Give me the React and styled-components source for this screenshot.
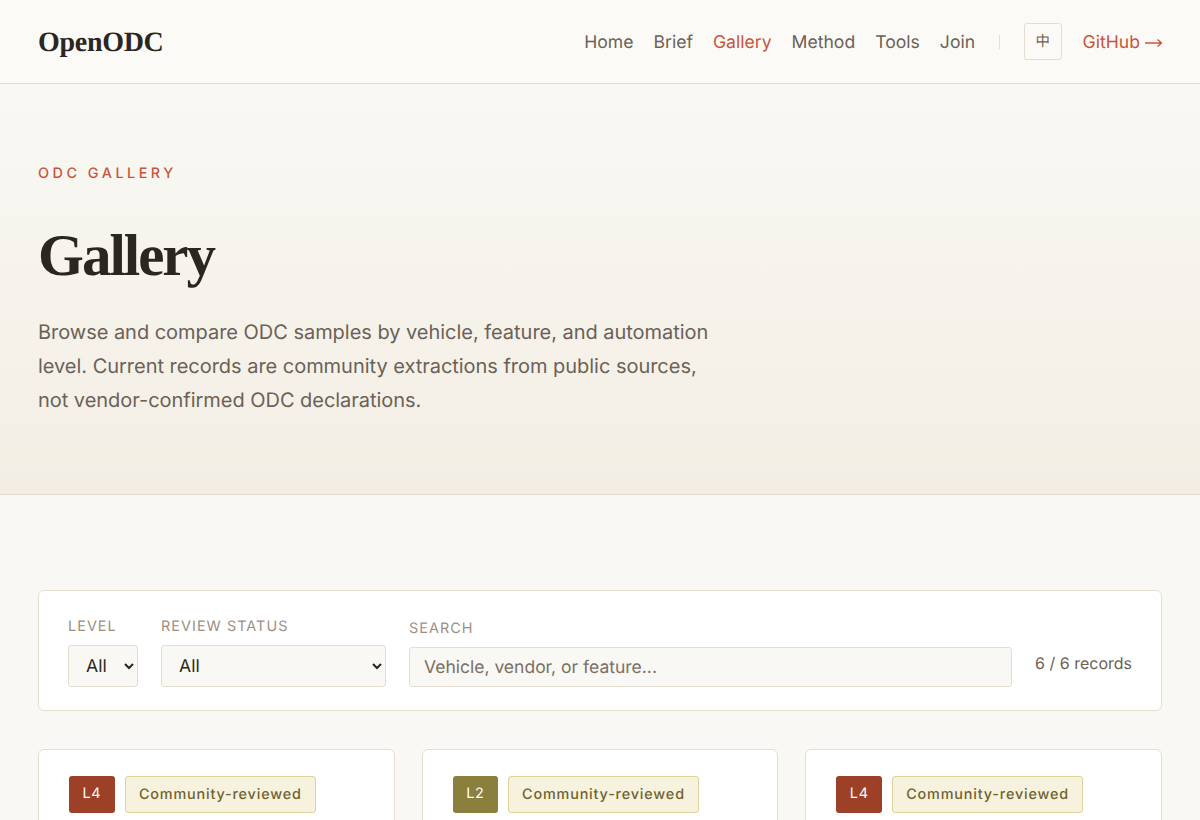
import React from "react";
import styled, { createGlobalStyle } from "styled-components";

const GlobalStyle = createGlobalStyle`
  * {
    box-sizing: border-box;
    text-rendering: geometricPrecision;
  }
  body {
    margin: 0;
    background: #f9f8f4;
    color: #2b2622;
    font-family: Inter, "Noto Sans", sans-serif;
  }
`;

const navLinks = ["Home", "Brief", "Gallery", "Method", "Tools", "Join"];

const cards = [
  { level: "L4", status: "Community-reviewed" },
  { level: "L2", status: "Community-reviewed" },
  { level: "L4", status: "Community-reviewed" },
];

function App() {
  return (
    <div>
      <GlobalStyle />
      <Header>
        <Logo>OpenODC</Logo>
        <Nav>
          {navLinks.map((link) => (
            <NavLink key={link} $active={link === "Gallery"}>
              {link}
            </NavLink>
          ))}
          <NavDivider />
          <LangButton>中</LangButton>
          <GithubLink>
            GitHub
            <svg width="17" height="10" viewBox="0 0 17 10" fill="none" stroke="currentColor" strokeWidth="1.3">
              <path d="M0 5H16.5M12.5 1.5L16.5 5L12.5 8.5" />
            </svg>
          </GithubLink>
        </Nav>
      </Header>

      <Hero>
        <Eyebrow>ODC GALLERY</Eyebrow>
        <Title>Gallery</Title>
        <Lead>
          Browse and compare ODC samples by vehicle, feature, and automation
          level. Current records are community extractions from public sources,
          not vendor-confirmed ODC declarations.
        </Lead>
      </Hero>

      <Main>
        <FilterPanel>
          <Field>
            <FieldLabel>Level</FieldLabel>
            <Select $width="70px" defaultValue="All">
              <option>All</option>
              <option>L2</option>
              <option>L4</option>
            </Select>
          </Field>
          <Field>
            <FieldLabel>Review status</FieldLabel>
            <Select $width="225px" defaultValue="All">
              <option>All</option>
              <option>Community-reviewed</option>
            </Select>
          </Field>
          <SearchField>
            <FieldLabel>Search</FieldLabel>
            <SearchInput placeholder="Vehicle, vendor, or feature..." />
          </SearchField>
          <RecordCount>6 / 6 records</RecordCount>
        </FilterPanel>

        <CardGrid>
          {cards.map((card, i) => (
            <Card key={i}>
              <BadgeRow>
                <LevelBadge $level={card.level}>{card.level}</LevelBadge>
                <StatusBadge>{card.status}</StatusBadge>
              </BadgeRow>
            </Card>
          ))}
        </CardGrid>
      </Main>
    </div>
  );
}

const Header = styled.header`
  height: 84px;
  padding: 0 38px;
  display: flex;
  align-items: center;
  justify-content: space-between;
  background: #fbfaf6;
  border-bottom: 1px solid #e2dcd0;
`;

const Logo = styled.div`
  padding-top: 2px;
  font-family: "Liberation Serif", serif;
  font-weight: 700;
  font-size: 28px;
  letter-spacing: -0.3px;
  color: #2b2622;
`;

const Nav = styled.nav`
  display: flex;
  align-items: center;
`;

const NavLink = styled.a`
  padding-top: 2px;
  font-size: 17.6px;
  margin-right: 20px;
  color: ${(p) => (p.$active ? "#c8553a" : "#6b6157")};
`;

const NavDivider = styled.span`
  width: 1px;
  height: 14px;
  margin: 0 24px 0 3.5px;
  background: #e5dfd3;
`;

const LangButton = styled.button`
  width: 38px;
  height: 37px;
  padding: 0 0 3px;
  margin-right: 21px;
  border: 1px solid #e5ddd0;
  border-radius: 3px;
  background: transparent;
  color: #6b6157;
  font-family: "Noto Sans CJK SC", sans-serif;
  font-size: 14.4px;
`;

const GithubLink = styled.a`
  padding-top: 2px;
  display: flex;
  align-items: center;
  gap: 5px;
  font-size: 17.6px;
  color: #c8553a;
`;

const Hero = styled.section`
  height: 411px;
  padding: 81px 38px 0;
  background: linear-gradient(180deg, #f9f8f4 0%, #f3eee4 100%);
  border-bottom: 1px solid #e2dcd0;
`;

const Eyebrow = styled.div`
  font-size: 14.4px;
  line-height: 17px;
  font-weight: 500;
  letter-spacing: 3.5px;
  color: #c8553a;
`;

const Title = styled.h1`
  margin: 37px 0 0;
  font-family: "Liberation Serif", serif;
  font-weight: 700;
  font-size: 59px;
  line-height: 72px;
  letter-spacing: -2px;
  color: #2b2622;
`;

const Lead = styled.p`
  margin: 24px 0 0;
  max-width: 680px;
  font-size: 20px;
  line-height: 34px;
  letter-spacing: -0.03px;
  color: #6b6157;
`;

const Main = styled.main`
  padding: 95px 38px 40px;
`;

const FilterPanel = styled.div`
  height: 121px;
  padding: 0 29px 23px;
  display: flex;
  align-items: flex-end;
  gap: 23px;
  background: #fff;
  border: 1px solid #e5ddd0;
  border-radius: 6px;
`;

const Field = styled.label`
  display: flex;
  flex-direction: column;
  gap: 10px;
`;

const SearchField = styled(Field)`
  flex: 1;
`;

const FieldLabel = styled.span`
  font-size: 14.4px;
  line-height: 17px;
  letter-spacing: 1.05px;
  text-transform: uppercase;
  color: #9a8f82;
`;

const Select = styled.select`
  width: ${(p) => p.$width};
  height: 42px;
  padding: 0 13px;
  background: #f9f8f4;
  border: 1px solid #e5ddd0;
  border-radius: 3px;
  color: #2b2622;
  font-family: Inter, sans-serif;
  font-size: 17.6px;
`;

const SearchInput = styled.input`
  width: 100%;
  height: 40px;
  padding: 0 14px;
  background: #f9f8f4;
  border: 1px solid #e5ddd0;
  border-radius: 3px;
  color: #2b2622;
  font-family: Inter, sans-serif;
  font-size: 17.5px;

  &::placeholder {
    color: #7a7065;
  }
`;

const RecordCount = styled.div`
  padding-bottom: 15px;
  font-size: 16px;
  line-height: 18px;
  color: #6b6157;
`;

const CardGrid = styled.div`
  margin-top: 38px;
  display: grid;
  grid-template-columns: repeat(3, 1fr);
  gap: 27px;
`;

const Card = styled.article`
  height: 300px;
  padding: 26px 30px;
  background: #fff;
  border: 1px solid #e5ddd0;
  border-radius: 6px;
`;

const BadgeRow = styled.div`
  display: flex;
  gap: 10px;
`;

const LevelBadge = styled.span`
  height: 37px;
  padding: 0 13.5px 2px;
  display: flex;
  align-items: center;
  border-radius: 3px;
  background: ${(p) => (p.$level === "L2" ? "#8a7f3c" : "#9c4128")};
  color: #fff;
  font-size: 14.4px;
  letter-spacing: 0.72px;
`;

const StatusBadge = styled.span`
  height: 37px;
  padding: 0 13px;
  display: flex;
  align-items: center;
  border: 1px solid #dfd29c;
  border-radius: 3px;
  background: #f7f2dd;
  color: #6f6230;
  font-size: 14.4px;
  font-weight: 500;
  letter-spacing: 0.83px;
`;

export default App;
